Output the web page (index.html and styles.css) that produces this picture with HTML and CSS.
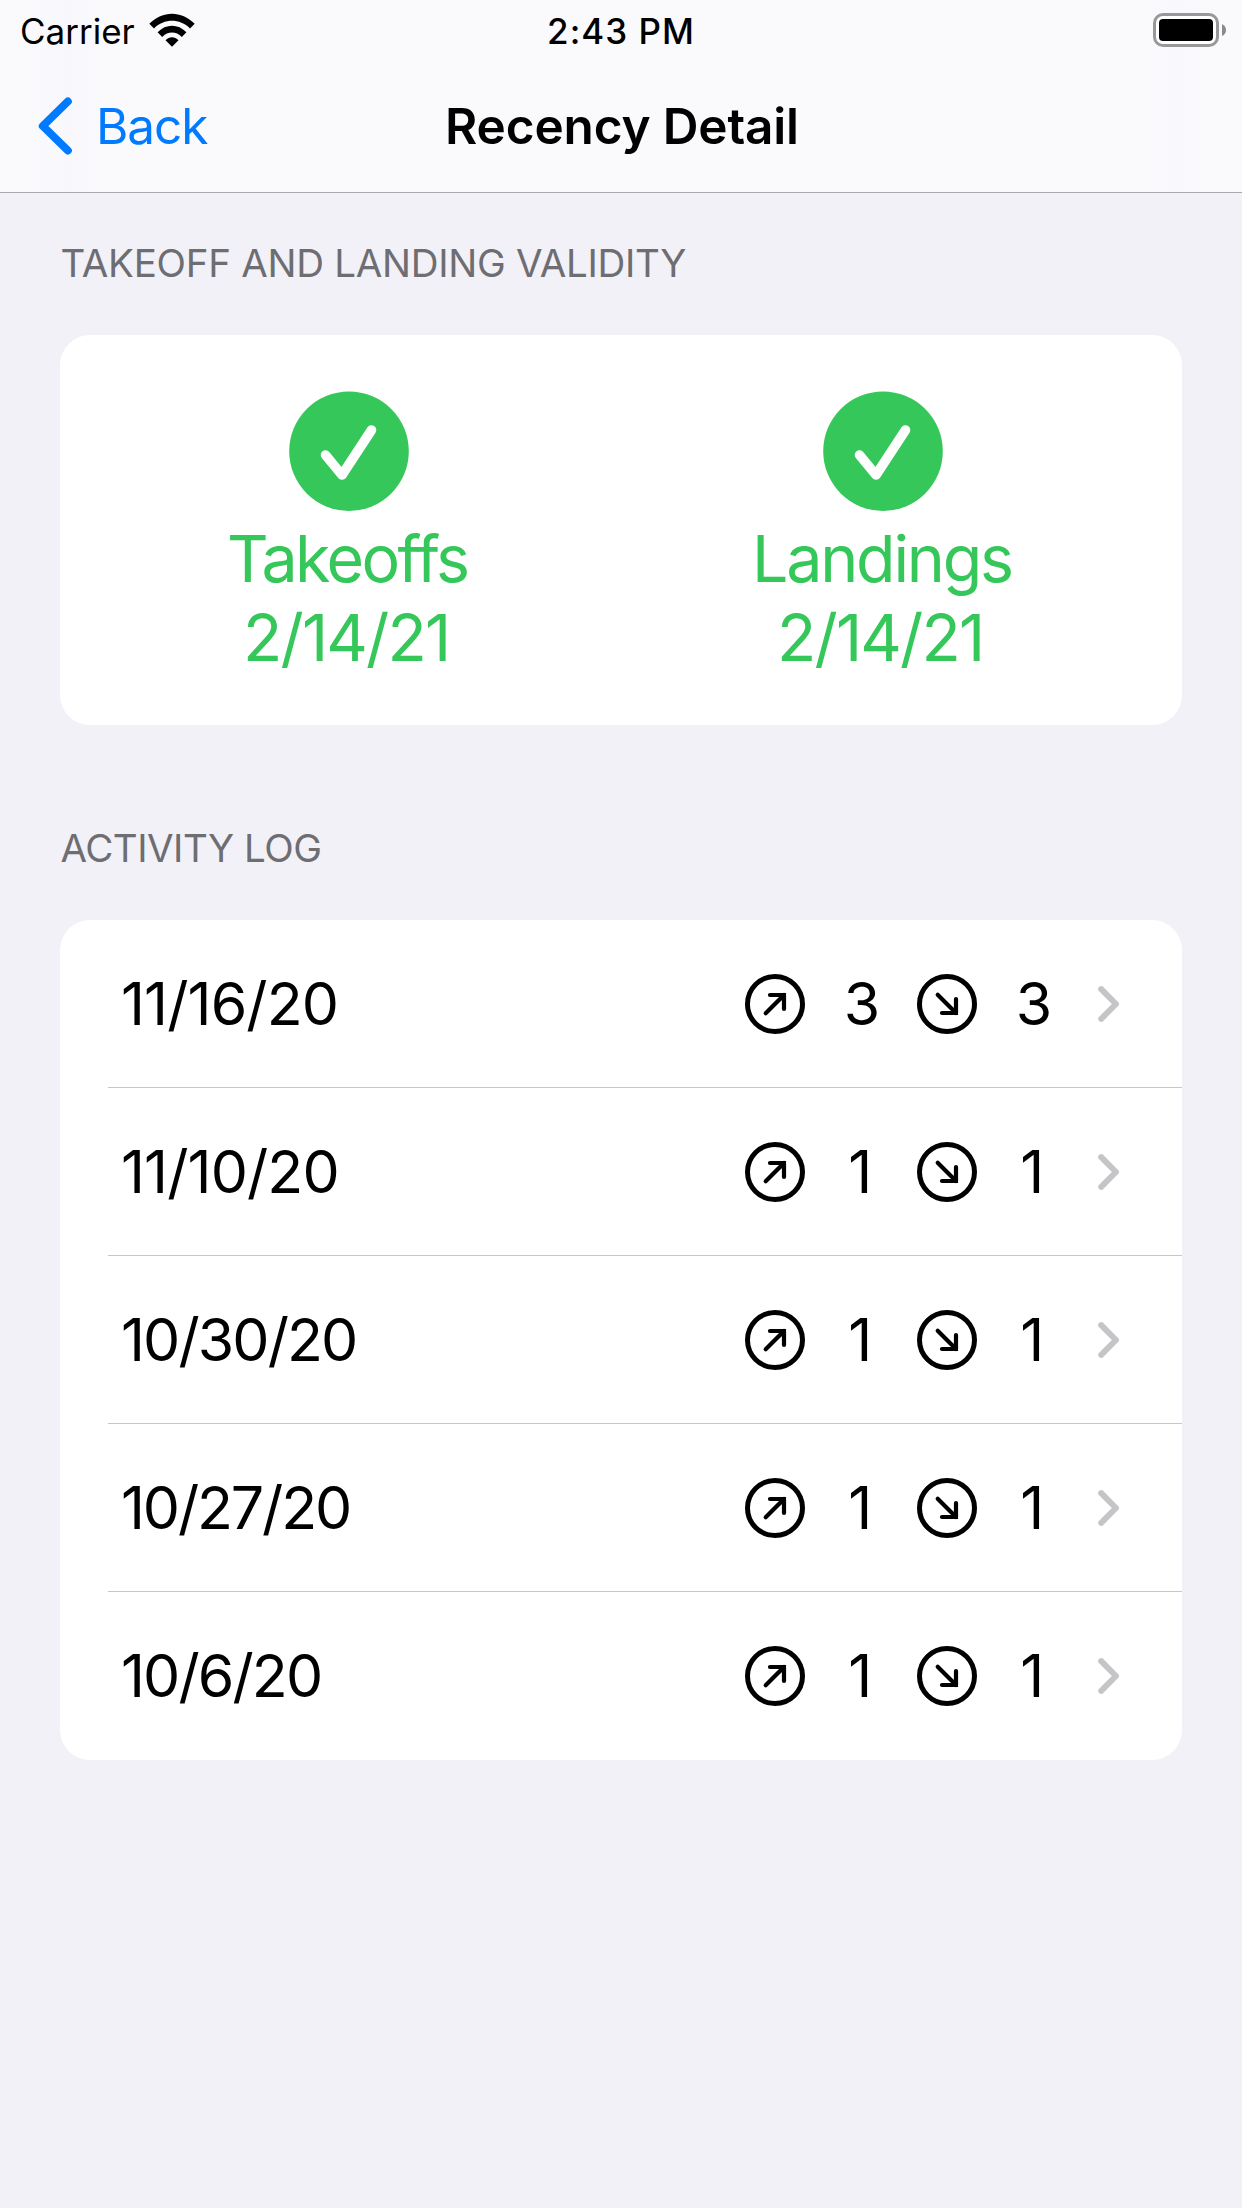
FILE: index.html
```html
<!DOCTYPE html>
<html lang="en">
<head>
<meta charset="utf-8">
<title>Recency Detail</title>
<link rel="stylesheet" href="styles.css">
</head>
<body>
<svg class="defs" width="0" height="0" aria-hidden="true">
  <symbol id="check" viewBox="0 0 120 120"><circle cx="60" cy="60.200" r="59.800" fill="#35c75a"/><path d="M36.500 64 53 84 82.500 39" fill="none" stroke="#fff" stroke-width="9.600" stroke-linecap="round" stroke-linejoin="round"/></symbol>
  <symbol id="up" viewBox="0 0 60 60"><circle cx="30" cy="30" r="27.500" fill="none" stroke="#000" stroke-width="5"/><path d="M20.700 39.300 39 21M25 21H39V35" fill="none" stroke="#000" stroke-width="4.200" stroke-linecap="round" stroke-linejoin="miter"/></symbol>
  <symbol id="down" viewBox="0 0 60 60"><circle cx="30" cy="30" r="27.500" fill="none" stroke="#000" stroke-width="5"/><path d="M20.700 20.700 39 39M25 39H39V25" fill="none" stroke="#000" stroke-width="4.200" stroke-linecap="round" stroke-linejoin="miter"/></symbol>
  <symbol id="chevron" viewBox="0 0 22 36"><path d="M3.200 3.200 18 18 3.200 32.800" fill="none" stroke="#c5c5c7" stroke-width="6" stroke-linecap="round" stroke-linejoin="round"/></symbol>
</svg>
<header class="bar">
  <div class="status">
    <div class="carrier"><span>Carrier</span>
      <svg class="wifi" width="46" height="34" viewBox="0 0 46 34"><path d="M0.300 10.800C13.500-2.600 32.500-2.600 45.700 10.800L41 15.500C30.800 5.300 15.200 5.300 5 15.500Z"/><path d="M8.600 19.200C17 10.600 29 10.600 37.400 19.200L32.800 23.900C27.200 18 18.800 18 13.200 23.900Z"/><path d="M16.500 27.300C20.300 23.300 25.700 23.300 29.500 27.300L23 33.700Z"/></svg>
    </div>
    <div class="time">2:43 PM</div>
    <div class="power"><svg width="74" height="34" viewBox="0 0 74 34"><rect x="1.500" y="1.500" width="63" height="31" rx="8.500" fill="#fff" stroke="#98989a" stroke-width="3"/><rect x="6" y="6" width="54" height="22" rx="4" fill="#000"/><path d="M69 11Q73 13 73 17T69 23Z" fill="#8a8a8c"/></svg></div>
  </div>
  <nav class="nav">
    <div class="back"><svg width="34" height="58" viewBox="0 0 34 58"><path d="M29.800 4.500 4.800 29 29.800 53.500" fill="none" stroke="#007aff" stroke-width="8" stroke-linecap="round" stroke-linejoin="round"/></svg><span class="back-label">Back</span></div>
    <h1 class="title">Recency Detail</h1>
  </nav>
</header>
<main>
  <h2 class="heading">TAKEOFF AND LANDING VALIDITY</h2>
  <section class="card validity">
    <div class="item"><svg class="badge"><use href="#check"/></svg><span class="takeoffs">Takeoffs</span><span class="expiry">2/14/21</span></div>
    <div class="item"><svg class="badge"><use href="#check"/></svg><span class="landings">Landings</span><span class="expiry">2/14/21</span></div>
  </section>
  <h2 class="heading second">ACTIVITY LOG</h2>
  <section class="card">
    <div class="row"><span class="date november">11/16/20</span><svg class="dir"><use href="#up"/></svg><span class="num three">3</span><svg class="dir"><use href="#down"/></svg><span class="num three">3</span><svg class="chev"><use href="#chevron"/></svg></div>
    <div class="row"><span class="date november">11/10/20</span><svg class="dir"><use href="#up"/></svg><span class="num">1</span><svg class="dir"><use href="#down"/></svg><span class="num">1</span><svg class="chev"><use href="#chevron"/></svg></div>
    <div class="row"><span class="date">10/30/20</span><svg class="dir"><use href="#up"/></svg><span class="num">1</span><svg class="dir"><use href="#down"/></svg><span class="num">1</span><svg class="chev"><use href="#chevron"/></svg></div>
    <div class="row"><span class="date tight">10/27/20</span><svg class="dir"><use href="#up"/></svg><span class="num">1</span><svg class="dir"><use href="#down"/></svg><span class="num">1</span><svg class="chev"><use href="#chevron"/></svg></div>
    <div class="row"><span class="date">10/6/20</span><svg class="dir"><use href="#up"/></svg><span class="num">1</span><svg class="dir"><use href="#down"/></svg><span class="num">1</span><svg class="chev"><use href="#chevron"/></svg></div>
  </section>
</main>
</body>
</html>
```
FILE: styles.css
```css
* { box-sizing: border-box; }
body { margin: 0; width: 1242px; height: 2208px; overflow: hidden; background: #f2f1f7; color: #000; font-family: Inter, "Liberation Sans", sans-serif; }
h1, h2 { margin: 0; font-weight: 400; }
svg { display: block; flex: none; }
span { white-space: nowrap; }
.defs { display: none; }

/* Status and navigation bars */
.bar { height: 193px; border-bottom: 1px solid #a9a9ac; background: linear-gradient(90deg, #fafafd 25px, #f8f7fc 70px, #fafafd 105px, #fafafd 1130px, #f9f8fc 1175px, #fafafd 1215px); }
.status { display: grid; grid-template-columns: 1fr auto 1fr; height: 62px; line-height: 62px; font-size: 35px; }
.carrier { display: flex; padding-left: 20px; }
.wifi { margin: 13px 0 0 14px; }
.time { font-weight: 500; letter-spacing: 1px; }
.power { display: flex; justify-content: flex-end; padding: 13px 15px 0 0; }
.nav { display: grid; grid-template-columns: 1fr auto 1fr; height: 130px; line-height: 128px; font-size: 49.5px; }
.back { display: flex; color: #007aff; padding-left: 38px; }
.back svg { margin-top: 35px; }
.back-label { margin-left: 24px; letter-spacing: -1.1px; }
.title { font-size: 49.5px; font-weight: 600; letter-spacing: -0.15px; padding-left: 2px; }

/* Grouped sections */
.heading { margin-left: 60.5px; height: 142px; line-height: 140px; font-size: 38.5px; color: #6d6d72; letter-spacing: -0.28px; }
.second { height: 195px; line-height: 246px; letter-spacing: -0.5px; }
.card { margin: 0 60px; border-radius: 30px; background: #fff; overflow: hidden; }
.validity { height: 390px; padding: 56px 32px 0 22px; display: grid; grid-template-columns: 1fr 1fr; color: #35c75a; font-size: 64.5px; line-height: 79px; }
.item { display: flex; flex-direction: column; align-items: center; }
.badge { width: 120px; height: 120px; margin-bottom: 9px; }
.takeoffs { letter-spacing: -2.6px; padding-right: 3.4px; }
.landings { letter-spacing: -2.2px; padding-right: 2.2px; }
.expiry { letter-spacing: -1.85px; padding-right: 5.6px; }

/* Activity rows */
.row { height: 168px; display: flex; align-items: center; gap: 16px; padding: 0 62px 0 61px; font-size: 59px; line-height: 72px; background: linear-gradient(#c6c6c8, #c6c6c8) 48px 167px / 1074px 1px no-repeat; }
.row:last-child { background: none; }
.date { margin-right: auto; letter-spacing: -1.9px; }
.november { letter-spacing: -0.9px; }
.tight { letter-spacing: -2.15px; }
.dir { width: 60px; height: 60px; }
.num { width: 80px; text-align: center; padding-right: 1.5px; }
.three { padding: 0 0 0 2px; }
.chev { width: 22px; height: 36px; margin-left: 9px; }
```
